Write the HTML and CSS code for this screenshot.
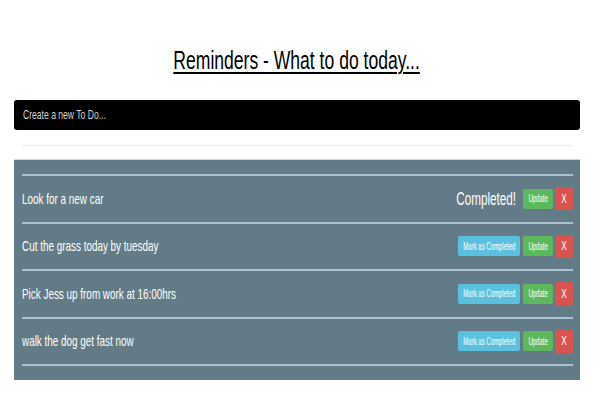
FILE: index.html
```html
<!DOCTYPE html>
<html>
<head>
<meta charset="utf-8">
<link rel="stylesheet" href="styles.css">
</head>
<body>
<div class="page">
  <h1 class="title"><span class="sq sq-center">Reminders - What to do today...</span></h1>
  <div class="input-box"><span class="sq sq-left">Create a new To Do...</span></div>
  <div class="divider"></div>
  <div class="panel">
    <ul class="list">
      <li class="row">
        <span class="task"><span class="sq sq-left">Look for a new car</span></span>
        <div class="actions">
          <span class="done"><span class="sq sq-right">Completed!</span></span>
          <span class="btn btn-green"><span class="sq sq-center">Update</span></span>
          <span class="btn btn-red"><span class="sq sq-center">X</span></span>
        </div>
      </li>
      <li class="row">
        <span class="task"><span class="sq sq-left">Cut the grass today by tuesday</span></span>
        <div class="actions">
          <span class="btn btn-blue"><span class="sq sq-center">Mark as Completed</span></span>
          <span class="btn btn-green"><span class="sq sq-center">Update</span></span>
          <span class="btn btn-red"><span class="sq sq-center">X</span></span>
        </div>
      </li>
      <li class="row">
        <span class="task"><span class="sq sq-left">Pick Jess up from work at 16:00hrs</span></span>
        <div class="actions">
          <span class="btn btn-blue"><span class="sq sq-center">Mark as Completed</span></span>
          <span class="btn btn-green"><span class="sq sq-center">Update</span></span>
          <span class="btn btn-red"><span class="sq sq-center">X</span></span>
        </div>
      </li>
      <li class="row">
        <span class="task"><span class="sq sq-left">walk the dog get fast now</span></span>
        <div class="actions">
          <span class="btn btn-blue"><span class="sq sq-center">Mark as Completed</span></span>
          <span class="btn btn-green"><span class="sq sq-center">Update</span></span>
          <span class="btn btn-red"><span class="sq sq-center">X</span></span>
        </div>
      </li>
    </ul>
  </div>
</div>
</body>
</html>
```
FILE: styles.css
```css
html, body {
  margin: 0;
  padding: 0;
  background: #ffffff;
}
.page {
  padding: 0 20px 0 14px;
  font-family: "Liberation Sans", Arial, sans-serif;
}
.sq {
  display: inline-block;
  white-space: nowrap;
  transform: scaleX(0.66);
}
.sq-left { transform-origin: left center; }
.sq-right { transform-origin: right center; }
.sq-center { transform-origin: center center; }
.title {
  margin: 0 0 25px 0;
  padding-top: 45px;
  text-align: center;
  font-weight: normal;
  font-size: 26px;
  line-height: 30px;
  color: #000;
  white-space: nowrap;
}
.title .sq {
  transform: scaleX(0.675);
  text-decoration: underline;
  text-decoration-thickness: 2px;
  text-underline-offset: 3px;
}
.input-box {
  height: 30px;
  background: #000;
  border-radius: 3px;
  color: #d4d4d4;
  font-size: 13px;
  line-height: 30px;
  padding-left: 9px;
  overflow: hidden;
}
.divider {
  margin: 15px 8px 13px 8px;
  border-top: 1px solid #ececec;
}
.panel {
  background: #627b86;
  border-top: 1px solid #d3d9dc;
  padding: 14px 7px 14px 8px;
}
.list {
  list-style: none;
  margin: 0;
  padding: 0;
  border-top: 2px solid #a9c2cb;
}
.row {
  height: 45.5px;
  border-bottom: 2px solid #a9c2cb;
  display: flex;
  align-items: center;
  justify-content: space-between;
}
.task {
  color: #ffffff;
  font-size: 15px;
  line-height: 18px;
}
.task .sq { transform: scaleX(0.66); }
.actions {
  display: flex;
  align-items: center;
}
.done {
  color: #ffffff;
  font-size: 18px;
  line-height: 20px;
  margin-right: 7px;
}
.done .sq { transform: scaleX(0.65); }
.btn {
  display: flex;
  justify-content: center;
  align-items: center;
  color: #fff;
  font-size: 10px;
  height: 20px;
  border-radius: 2px;
  overflow: hidden;
}
.btn .sq { transform: scaleX(0.6); }
.btn-blue {
  background: #5bc0de;
  width: 62px;
  margin-right: 3px;
}
.btn-green {
  background: #5cb85c;
  width: 30px;
  margin-right: 2px;
}
.btn-red {
  background: #d9534f;
  width: 18px;
  height: 23px;
  font-size: 12px;
}
.btn-red .sq { transform: scaleX(0.68); }
```
